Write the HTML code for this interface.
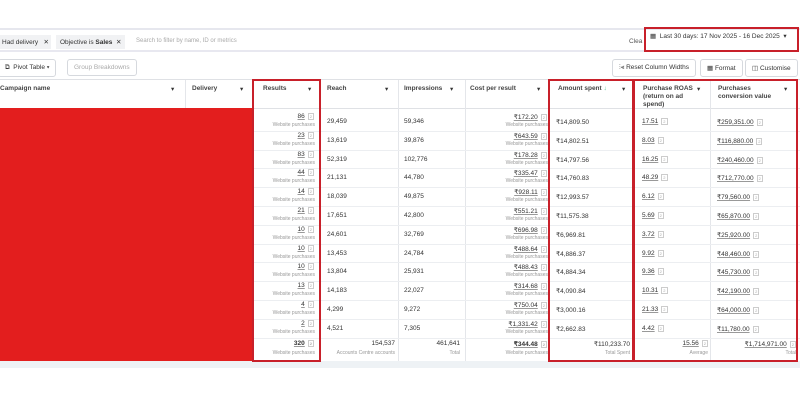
<!DOCTYPE html><html><head><style>
*{margin:0;padding:0;box-sizing:border-box}
body{width:800px;height:400px;background:#fff;font-family:"Liberation Sans",sans-serif;position:relative;overflow:hidden;color:#333}
.a{position:absolute;white-space:nowrap}
.s{font-size:6.5px}
.t{font-size:5px;color:#999}
.u{text-decoration:underline;text-decoration-color:#999}
.box{position:absolute;border:2.5px solid #c8202a}
.vl{position:absolute;width:1px;background:#e4e6ea}
.hl{position:absolute;height:1px;background:#eceef1}
.btn{position:absolute;border:1px solid #d6d9de;border-radius:3px;background:#fff;font-size:6.5px;padding:4px 6px;color:#333}
.c{font-size:4px;color:#aaa;border:0.5px solid #ccc;padding:0 1px;margin-left:3px}
</style></head><body>
<div class="hl" style="left:0;top:28px;width:800px;background:#e6e7ee;height:2px"></div>
<div class="hl" style="left:0;top:50px;width:645px;background:#e8e8f0;height:2px"></div>
<div class="a" style="left:0;top:35px;height:14px;background:#f1f2f4;padding:3px 2px;font-size:6.5px">Had delivery &nbsp;&nbsp;✕</div>
<div class="a" style="left:56px;top:35px;height:14px;background:#f1f2f4;padding:3px 4px;font-size:6.5px">Objective is <b>Sales</b> &nbsp;✕</div>
<div class="a" style="left:136px;top:38px;font-size:6px;color:#aaa">Search to filter by name, ID or metrics</div>
<div class="a" style="left:629px;top:38px;font-size:6.5px;color:#555">Clea</div>
<div class="a" style="left:650px;top:32px;font-size:6.5px">▦ &nbsp;Last 30 days: 17 Nov 2025 - 16 Dec 2025 &nbsp;▾</div>
<div class="box" style="left:644px;top:27px;width:155px;height:25px"></div>
<div class="btn" style="left:-2px;top:59px">⧉ &nbsp;Pivot Table ▾</div>
<div class="btn" style="left:67px;top:59px;color:#aaa">Group Breakdowns</div>
<div class="btn" style="left:612px;top:59px">⫶⫷ Reset Column Widths</div>
<div class="btn" style="left:700px;top:59px">▦ Format</div>
<div class="btn" style="left:745px;top:59px">◫ Customise</div>
<div class="hl" style="left:0;top:79px;width:800px;background:#dfe1e5"></div>
<div class="hl" style="left:0;top:108px;width:800px;background:#dfe1e5"></div>
<div class="a s" style="left:0;top:85px;font-weight:bold;color:#444">Campaign name</div><div class="a s" style="left:171px;top:85px">▾</div>
<div class="a s" style="left:192px;top:85px;font-weight:bold;color:#444">Delivery</div><div class="a s" style="left:240px;top:85px">▾</div>
<div class="a s" style="left:263px;top:85px;font-weight:bold;color:#444">Results</div><div class="a s" style="left:308px;top:85px">▾</div>
<div class="a s" style="left:327px;top:85px;font-weight:bold;color:#444">Reach</div><div class="a s" style="left:385px;top:85px">▾</div>
<div class="a s" style="left:404px;top:85px;font-weight:bold;color:#444">Impressions</div><div class="a s" style="left:450px;top:85px">▾</div>
<div class="a s" style="left:470px;top:85px;font-weight:bold;color:#444">Cost per result</div><div class="a s" style="left:537px;top:85px">▾</div>
<div class="a s" style="left:558px;top:85px;font-weight:bold;color:#444">Amount spent <span style="color:#5b8">↓</span></div><div class="a s" style="left:622px;top:85px">▾</div>
<div class="a s" style="left:643px;top:85px;font-weight:bold;color:#444;white-space:normal;width:55px;line-height:8px">Purchase ROAS (return on ad spend)</div><div class="a s" style="left:697px;top:85px">▾</div>
<div class="a s" style="left:718px;top:85px;font-weight:bold;color:#444;white-space:normal;width:60px;line-height:8px">Purchases conversion value</div><div class="a s" style="left:784px;top:85px">▾</div>
<div class="vl" style="left:185px;top:80px;height:28px"></div>
<div class="vl" style="left:398px;top:80px;height:282px"></div>
<div class="vl" style="left:465px;top:80px;height:282px"></div>
<div class="vl" style="left:710px;top:80px;height:282px"></div>
<div id="rows"></div>
<div class="a" style="left:0;top:108px;width:253px;height:253px;background:#e31e1e"></div>
<div class="a" style="left:0;top:361px;width:800px;height:7px;background:#eef2f5"></div>
<div class="box" style="left:252px;top:79px;width:69px;height:283px"></div>
<div class="box" style="left:548px;top:79px;width:86px;height:283px"></div>
<div class="box" style="left:633px;top:79px;width:165px;height:283px"></div>
<script>
var d=[["86","29,459","59,346","172.20","14,809.50","17.51","259,351.00"],["23","13,619","39,876","643.59","14,802.51","8.03","116,880.00"],["83","52,319","102,776","178.28","14,797.56","16.25","240,460.00"],["44","21,131","44,780","335.47","14,760.83","48.29","712,770.00"],["14","18,039","49,875","928.11","12,993.57","6.12","79,560.00"],["21","17,651","42,800","551.21","11,575.38","5.69","65,870.00"],["10","24,601","32,769","696.98","6,969.81","3.72","25,920.00"],["10","13,453","24,784","488.64","4,886.37","9.92","48,460.00"],["10","13,804","25,931","488.43","4,884.34","9.36","45,730.00"],["13","14,183","22,027","314.68","4,090.84","10.31","42,190.00"],["4","4,299","9,272","750.04","3,000.16","21.33","64,000.00"],["2","4,521","7,305","1,331.42","2,662.83","4.42","11,780.00"]];
var h="",y=112,R=18.8;
d.forEach(function(r,i){var t=y+i*R;
h+='<div class="hl" style="left:253px;top:'+(t+R)+'px;width:547px"></div>';
h+='<div class="a s" style="right:486px;top:'+(t+1)+'px"><span class="u">'+r[0]+'</span><span class="c">2</span></div><div class="a t" style="right:485px;top:'+(t+10)+'px">Website purchases</div>';
h+='<div class="a s" style="left:327px;top:'+(t+6)+'px">'+r[1]+'</div>';
h+='<div class="a s" style="left:404px;top:'+(t+6)+'px">'+r[2]+'</div>';
h+='<div class="a s" style="right:253px;top:'+(t+1)+'px"><span class="u">₹'+r[3]+'</span><span class="c">2</span></div><div class="a t" style="right:252px;top:'+(t+10)+'px">Website purchases</div>';
h+='<div class="a s" style="left:556px;top:'+(t+6)+'px">₹'+r[4]+'</div>';
h+='<div class="a s" style="left:642px;top:'+(t+6)+'px"><span class="u">'+r[5]+'</span><span class="c">2</span></div>';
h+='<div class="a s" style="left:717px;top:'+(t+6)+'px"><span class="u">₹'+r[6]+'</span><span class="c">2</span></div>';});
var t=337;
h+='<div class="a s" style="right:486px;top:'+(t+3)+'px;font-weight:bold"><span class="u">320</span><span class="c">2</span></div><div class="a t" style="right:485px;top:'+(t+13)+'px">Website purchases</div>';
h+='<div class="a s" style="right:405px;top:'+(t+3)+'px">154,537</div><div class="a t" style="right:405px;top:'+(t+13)+'px">Accounts Centre accounts</div>';
h+='<div class="a s" style="right:340px;top:'+(t+3)+'px">461,641</div><div class="a t" style="right:340px;top:'+(t+13)+'px">Total</div>';
h+='<div class="a s" style="right:253px;top:'+(t+3)+'px;font-weight:bold"><span class="u">₹344.48</span><span class="c">2</span></div><div class="a t" style="right:252px;top:'+(t+13)+'px">Website purchases</div>';
h+='<div class="a s" style="right:170px;top:'+(t+3)+'px">₹110,233.70</div><div class="a t" style="right:170px;top:'+(t+13)+'px">Total Spent</div>';
h+='<div class="a s" style="right:92px;top:'+(t+3)+'px"><span class="u">15.56</span><span class="c">2</span></div><div class="a t" style="right:92px;top:'+(t+13)+'px">Average</div>';
h+='<div class="a s" style="right:4px;top:'+(t+3)+'px"><span class="u">₹1,714,971.00</span><span class="c">2</span></div><div class="a t" style="right:4px;top:'+(t+13)+'px">Total</div>';
document.getElementById("rows").innerHTML=h;
</script>
</body></html>
